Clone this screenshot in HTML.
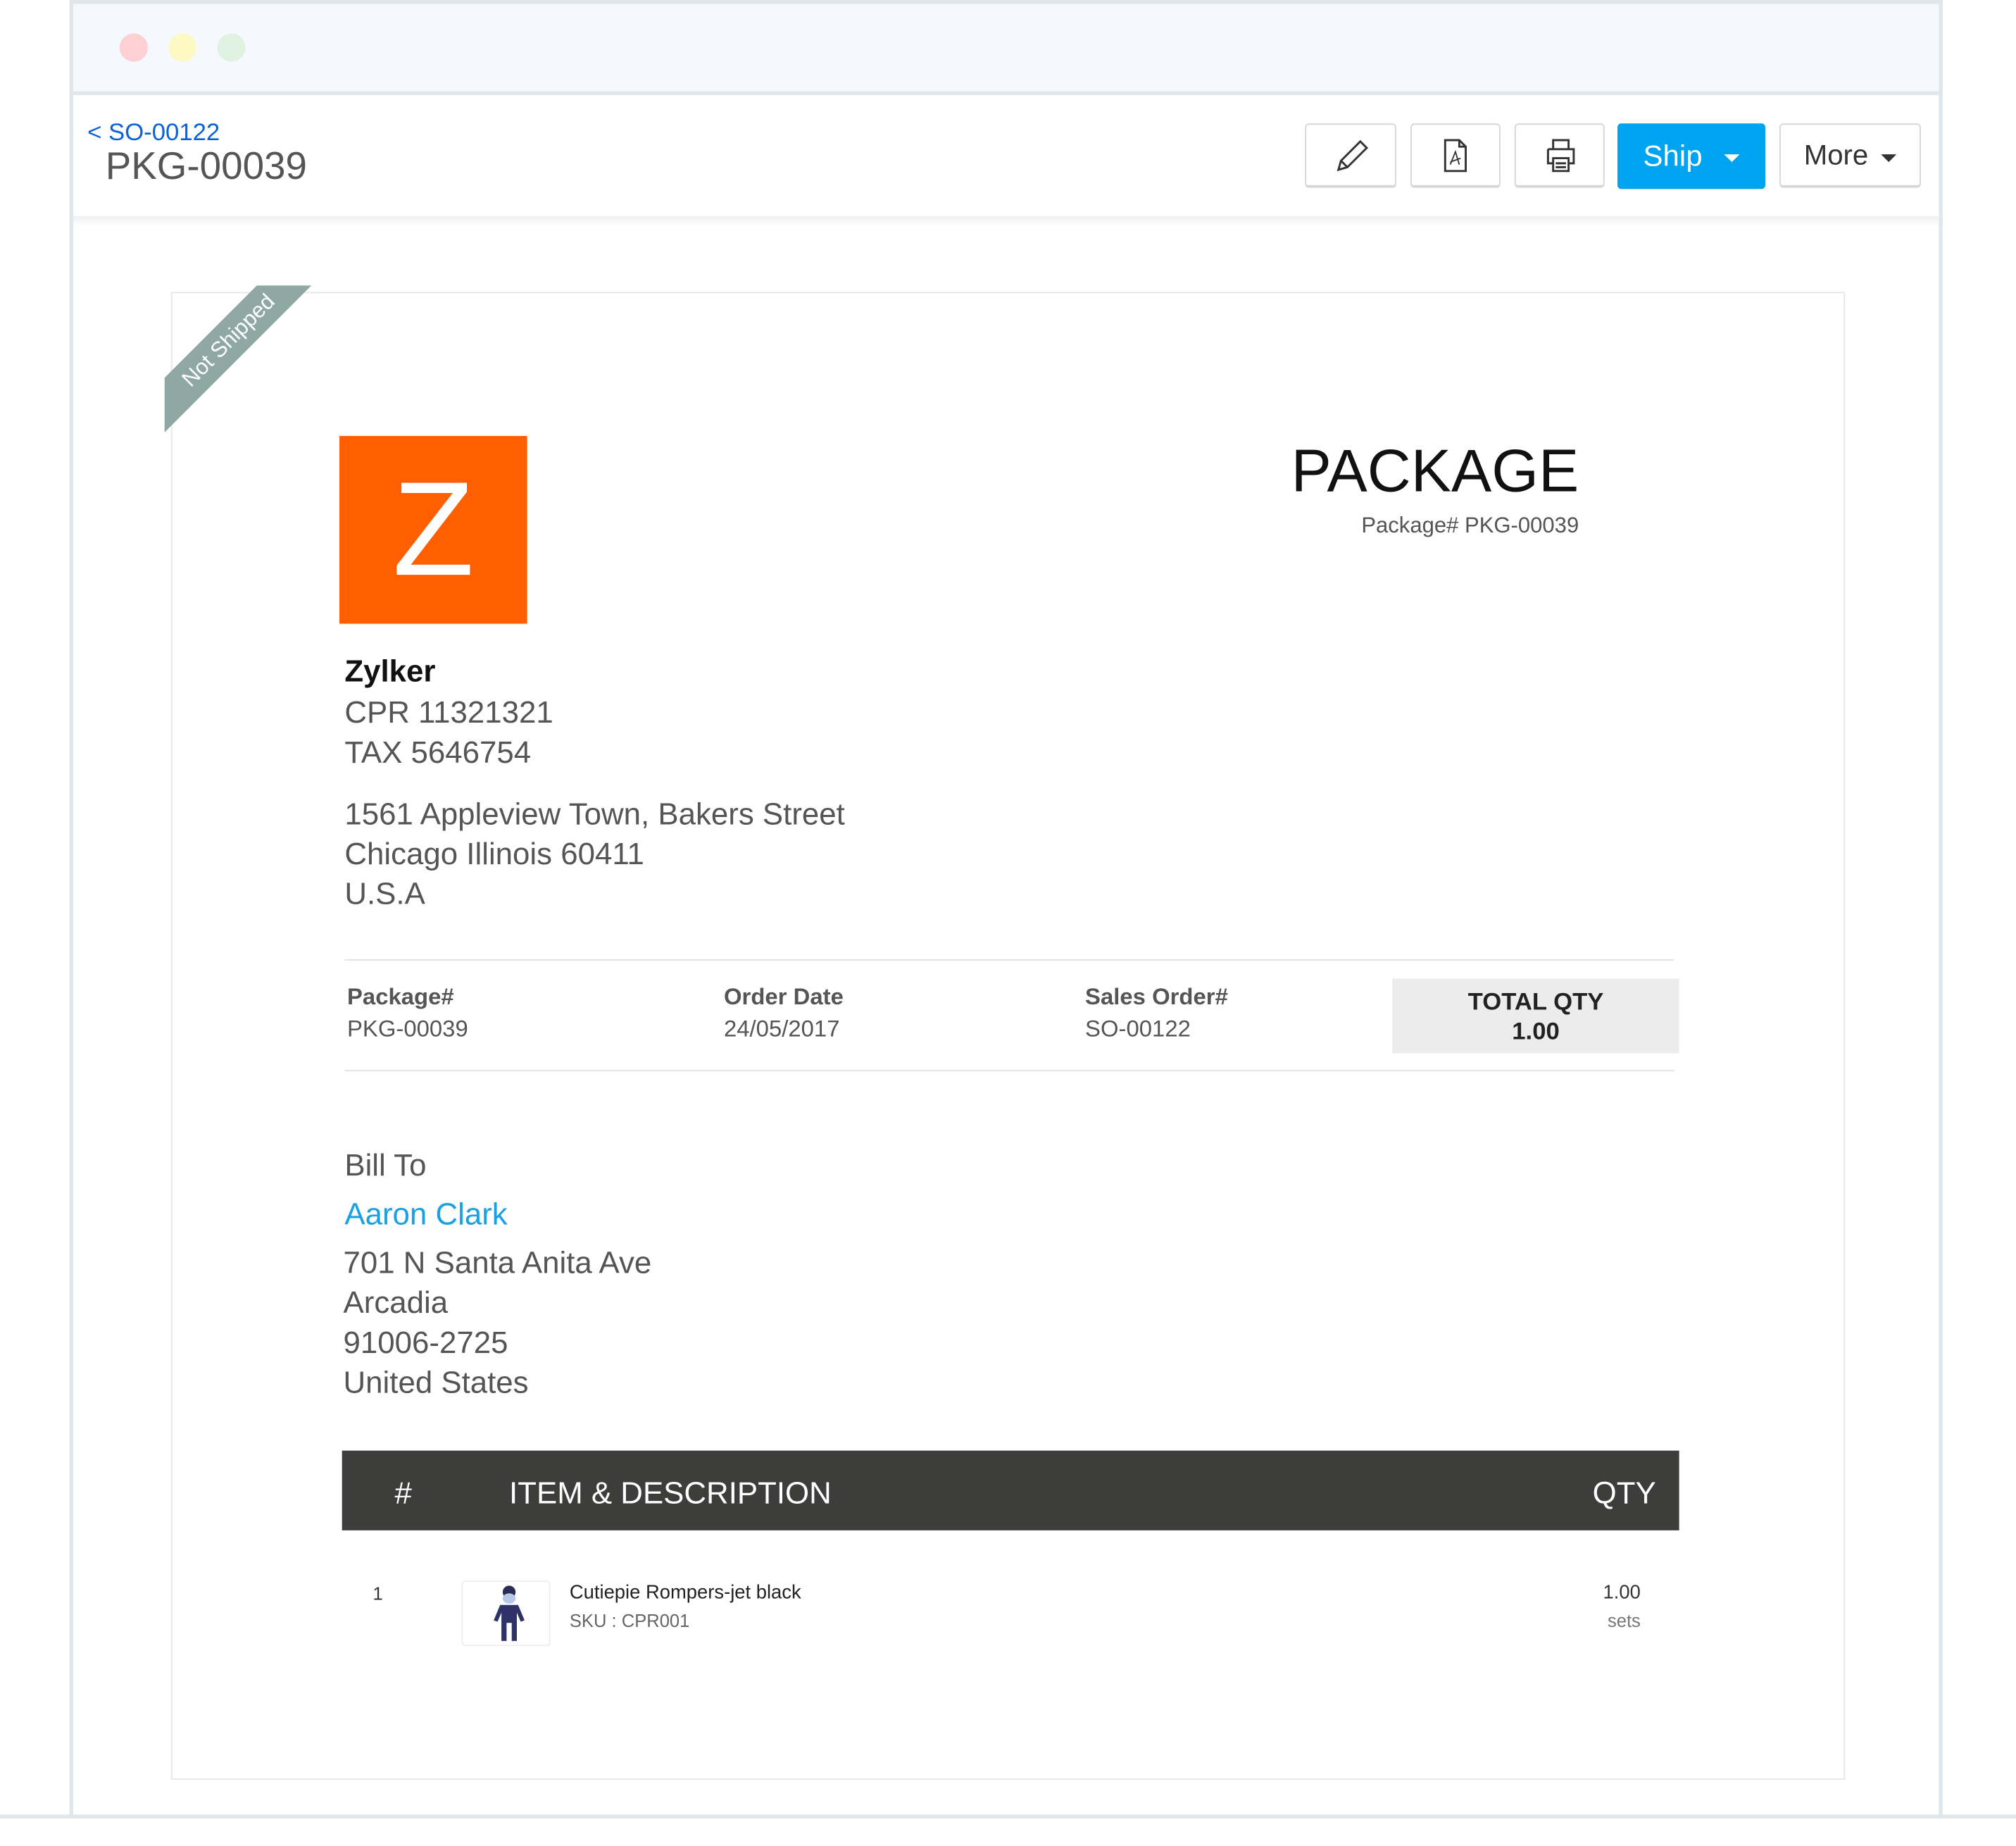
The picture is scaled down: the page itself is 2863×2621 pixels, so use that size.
<!DOCTYPE html>
<html><head><meta charset="utf-8">
<style>
html,body{margin:0;padding:0;background:#fff;width:2863px;height:2621px;overflow:hidden}
#w{position:absolute;left:0;top:0;width:1568px;height:1435px;transform:scale(1.8259);transform-origin:0 0;font-family:"Liberation Sans",sans-serif;color:#555}
.a{position:absolute;white-space:nowrap}
.btn{position:absolute;top:96px;height:50px;border:1px solid #d6d6d6;border-bottom:2px solid #d6d6d6;border-radius:3px;background:#fff;box-sizing:border-box}
</style></head><body><div id="w">
<div class="a" style="left:54px;top:0;width:1457px;height:1414px;border:3px solid #e1e6ea;border-bottom:none;box-sizing:border-box;background:#fff"></div>
<div class="a" style="left:57px;top:3px;width:1451px;height:68px;background:#f5f9fd;border-bottom:3px solid #e1e6ea"></div>
<div class="a" style="left:93px;top:26px;width:22px;height:22px;border-radius:50%;background:#fdd0d3"></div>
<div class="a" style="left:131px;top:26px;width:22px;height:22px;border-radius:50%;background:#fdf9c5"></div>
<div class="a" style="left:169px;top:26px;width:22px;height:22px;border-radius:50%;background:#e0f3e3"></div>
<div class="a" style="left:57px;top:168px;width:1451px;height:8px;background:linear-gradient(#f0f0f0,#fff)"></div>
<div class="a" style="left:0;top:1411px;width:1568px;height:3px;background:#e1e6ea"></div>

<div class="a" style="left:68px;top:93px;font-size:19px;color:#0a62d6">&lt; SO-00122</div>
<div class="a" style="left:82px;top:113px;font-size:30px;color:#555">PKG-00039</div>

<div class="btn" style="left:1015px;width:71px"><svg width="71" height="48" viewBox="0 0 71 48"><path d="M25 35 L27 28 L42 13 L47 18 L32 33 Z M27 28 L32 33" fill="none" stroke="#333" stroke-width="1.6"/></svg></div>
<div class="btn" style="left:1097px;width:70px"><svg width="70" height="48" viewBox="0 0 70 48"><path d="M26 12 H37 L42 17 V36 H26 Z M37 12 V17 H42" fill="none" stroke="#333" stroke-width="1.6"/><path d="M30 31 L34 21 L37 31 M30 29 L38 26" fill="none" stroke="#333" stroke-width="1"/></svg></div>
<div class="btn" style="left:1178px;width:70px"><svg width="70" height="48" viewBox="0 0 70 48"><path d="M29 19 V12 H41 V19 M25 19 H45 V30 H41 M29 30 H25 V19 M29 26 H41 V36 H29 Z M31 30 H39 M31 33 H39" fill="none" stroke="#333" stroke-width="1.6"/></svg></div>
<div class="a" style="left:1258px;top:96px;width:115px;height:51px;background:#00a3f0;border-radius:3px;color:#fff;font-size:23px;line-height:51px"><span style="margin-left:20px">Ship</span><span style="position:absolute;left:83px;top:24px;border:6px solid transparent;border-top:6px solid #fff"></span></div>
<div class="btn" style="left:1384px;width:110px;color:#333;font-size:22px;line-height:48px"><span style="margin-left:18px">More</span><span style="position:absolute;left:78px;top:23px;border:6px solid transparent;border-top:6px solid #333"></span></div>

<div class="a" style="left:133px;top:227px;width:1302px;height:1157px;border:1px solid #e6e6e6;box-sizing:border-box"></div>
<div class="a" style="left:128px;top:222px;width:125px;height:125px;overflow:hidden">
 <div class="a" style="left:-50px;top:28px;width:200px;height:30px;background:#8fa8a3;transform:rotate(-45deg);color:#fff;font-size:17px;line-height:30px;text-align:center">Not Shipped</div>
</div>
<div class="a" style="left:264px;top:339px;width:146px;height:146px;background:#ff5f00;color:#fff;font-size:104px;line-height:146px;text-align:center">Z</div>
<div class="a" style="left:900px;width:328px;top:338px;font-size:47px;color:#111;text-align:right">PACKAGE</div>
<div class="a" style="left:900px;width:328px;top:399px;font-size:17px;color:#555;text-align:right">Package# PKG-00039</div>

<div class="a" style="left:268px;top:509px;font-size:24px;font-weight:bold;color:#111">Zylker</div>
<div class="a" style="left:268px;top:539px;font-size:24px;line-height:31px">CPR 11321321<br>TAX 5646754</div>
<div class="a" style="left:268px;top:618px;font-size:24px;line-height:31px">1561 Appleview Town, Bakers Street<br>Chicago Illinois 60411<br>U.S.A</div>

<div class="a" style="left:268px;top:746px;width:1034px;height:1px;background:#e3e3e3"></div>
<div class="a" style="left:268px;top:832px;width:1034px;height:1px;background:#e3e3e3"></div>
<div class="a" style="left:270px;top:763px;font-size:18px;line-height:25px"><b style="font-weight:600">Package#</b><br>PKG-00039</div>
<div class="a" style="left:563px;top:763px;font-size:18px;line-height:25px"><b style="font-weight:600">Order Date</b><br>24/05/2017</div>
<div class="a" style="left:844px;top:763px;font-size:18px;line-height:25px"><b style="font-weight:600">Sales Order#</b><br>SO-00122</div>
<div class="a" style="left:1083px;top:761px;width:223px;height:58px;background:#ececec;color:#222;font-weight:bold;font-size:19px;line-height:23px;text-align:center;padding-top:7px;box-sizing:border-box">TOTAL QTY<br>1.00</div>

<div class="a" style="left:268px;top:893px;font-size:24px">Bill To</div>
<div class="a" style="left:268px;top:931px;font-size:24px;color:#1ba1e2">Aaron Clark</div>
<div class="a" style="left:267px;top:967px;font-size:24px;line-height:31px">701 N Santa Anita Ave<br>Arcadia<br>91006-2725<br>United States</div>

<div class="a" style="left:266px;top:1128px;width:1040px;height:62px;background:#3d3d3b;color:#fff;font-size:24px;line-height:68px">
 <span class="a" style="left:41px">#</span><span class="a" style="left:130px">ITEM &amp; DESCRIPTION</span><span class="a" style="right:18px">QTY</span></div>

<div class="a" style="left:290px;top:1231px;font-size:14px;color:#333">1</div>
<div class="a" style="left:359px;top:1229px;width:69px;height:51px;border:1px solid #eee;border-radius:3px;box-sizing:border-box">
 <svg width="69" height="51" viewBox="0 0 69 51"><circle cx="36" cy="8" r="5" fill="#2b2d55"/><ellipse cx="36" cy="13" rx="5" ry="4" fill="#b5c8e6"/><path d="M29 18 H43 L48 30 L45 31 L42 24 V46 H38 V32 H34 V46 H30 V24 L27 31 L24 30 Z" fill="#2e3266"/></svg></div>
<div class="a" style="left:443px;top:1230px;font-size:15px;color:#222">Cutiepie Rompers-jet black</div>
<div class="a" style="left:443px;top:1252px;font-size:14px;color:#666">SKU : CPR001</div>
<div class="a" style="left:1176px;width:100px;text-align:right;top:1230px;font-size:15px;color:#333">1.00</div>
<div class="a" style="left:1176px;width:100px;text-align:right;top:1252px;font-size:14px;color:#777">sets</div>
</div></body></html>
